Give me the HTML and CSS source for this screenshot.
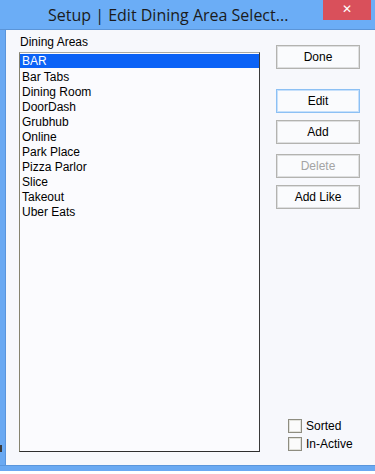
FILE: index.html
```html
<!DOCTYPE html>
<html>
<head>
<meta charset="utf-8">
<link rel="stylesheet" href="styles.css">
</head>
<body>
<div class="window">
  <div class="titlebar">
    <div class="title">Setup | Edit Dining Area Select...</div>
    <div class="close">&#x2715;</div>
  </div>
  <div class="frame">
    <div class="side-border"></div>
    <div class="content">
      <div class="left-col">
        <div class="label">Dining Areas</div>
        <div class="listbox">
          <div class="item selected">BAR</div>
          <div class="item">Bar Tabs</div>
          <div class="item">Dining Room</div>
          <div class="item">DoorDash</div>
          <div class="item">Grubhub</div>
          <div class="item">Online</div>
          <div class="item">Park Place</div>
          <div class="item">Pizza Parlor</div>
          <div class="item">Slice</div>
          <div class="item">Takeout</div>
          <div class="item">Uber Eats</div>
        </div>
      </div>
      <div class="right-col">
        <div class="btn btn-done">Done</div>
        <div class="btn btn-edit focused">Edit</div>
        <div class="btn btn-add">Add</div>
        <div class="btn btn-delete disabled">Delete</div>
        <div class="btn btn-addlike">Add Like</div>
        <div class="checks">
          <label class="check"><span class="box"></span><span>Sorted</span></label>
          <label class="check"><span class="box"></span><span>In-Active</span></label>
        </div>
      </div>
    </div>
  </div>
  <div class="bottom-border"></div>
  <div class="behind-mark"></div>
</div>
</body>
</html>
```
FILE: styles.css
```css
html, body {
  margin: 0;
  padding: 0;
  background: #ffffff;
}
.window {
  width: 375px;
  height: 474px;
  display: flex;
  flex-direction: column;
  font-family: "Liberation Sans", Arial, sans-serif;
  font-size: 12px;
  color: #000;
  overflow: hidden;
  position: relative;
}
.titlebar {
  height: 30px;
  background: #6badf6;
  border-bottom: 1px solid #5b95d8;
  box-sizing: border-box;
  display: flex;
  align-items: flex-start;
  flex-shrink: 0;
}
.title {
  flex: 1;
  padding-left: 48px;
  padding-top: 4px;
  font-family: "Open Sans", "Noto Sans", sans-serif;
  font-size: 16px;
  line-height: 22px;
  color: #1b1b1b;
  white-space: nowrap;
}
.close {
  width: 48px;
  height: 20px;
  margin-right: 4px;
  background: #d9505b;
  color: #fff;
  font-family: "DejaVu Sans", sans-serif;
  font-size: 12px;
  font-weight: bold;
  line-height: 18px;
  text-align: center;
}
.frame {
  flex: 1;
  display: flex;
  min-height: 0;
}
.side-border {
  width: 6px;
  background: #6aa9f2;
  box-shadow: inset -1px 0 0 #5a95dc;
  flex-shrink: 0;
}
.content {
  flex: 1;
  background: #f7f8fc;
  display: flex;
  padding: 5px 0 0 13px;
}
.left-col {
  width: 241px;
  display: flex;
  flex-direction: column;
}
.label {
  height: 15px;
  line-height: 15px;
  padding-left: 1px;
  margin-bottom: 2px;
}
.listbox {
  height: 400px;
  box-sizing: border-box;
  background: #fbfbfe;
  border-top: 1px solid #a9a9a4;
  border-left: 1px solid #86836f;
  border-right: 1px solid #3a3a3a;
  border-bottom: 1px solid #2e2e2e;
  padding: 1px 0 0 0;
}
.item {
  height: 15px;
  line-height: 15px;
  padding-left: 2px;
  white-space: nowrap;
}
.item.selected {
  background: #0b62f6;
  color: #fff;
  height: 14px;
  line-height: 15px;
  margin-bottom: 2px;
}
.right-col {
  margin-left: 16px;
  width: 84px;
  display: flex;
  flex-direction: column;
  padding-top: 10px;
}
.btn {
  height: 24px;
  box-sizing: border-box;
  border: 1px solid #b3b3b0;
  box-shadow: inset 0 0 0 1px #dedfe0;
  background: #fafbfd;
  text-align: center;
  line-height: 22px;
}
.btn-edit {
  margin-top: 20px;
}
.btn-add {
  margin-top: 7px;
}
.btn-delete {
  margin-top: 10px;
}
.btn-addlike {
  margin-top: 7px;
}
.btn.focused {
  border-color: #8cc0f4;
  box-shadow: inset 0 0 0 1px #c6e0fb;
}
.btn.disabled {
  color: #a4a4a4;
}
.checks {
  margin-top: auto;
  margin-bottom: 14px;
  padding-left: 12px;
  display: flex;
  flex-direction: column;
  gap: 4px;
}
.check {
  display: flex;
  align-items: center;
  height: 14px;
  gap: 4px;
  white-space: nowrap;
}
.box {
  width: 14px;
  height: 14px;
  box-sizing: border-box;
  border: 1px solid #8e8d80;
  box-shadow: inset 0 0 0 1px #e2e2dc;
  background: #fbfbfb;
}
.bottom-border {
  height: 9px;
  flex-shrink: 0;
  background: linear-gradient(#5a96dc 0 1px, #6aa9f2 1px 6px, #ffffff 6px);
}
.behind-mark {
  position: absolute;
  left: 0;
  top: 445px;
  width: 2px;
  height: 7px;
  background: #3c3c3c;
}
```
